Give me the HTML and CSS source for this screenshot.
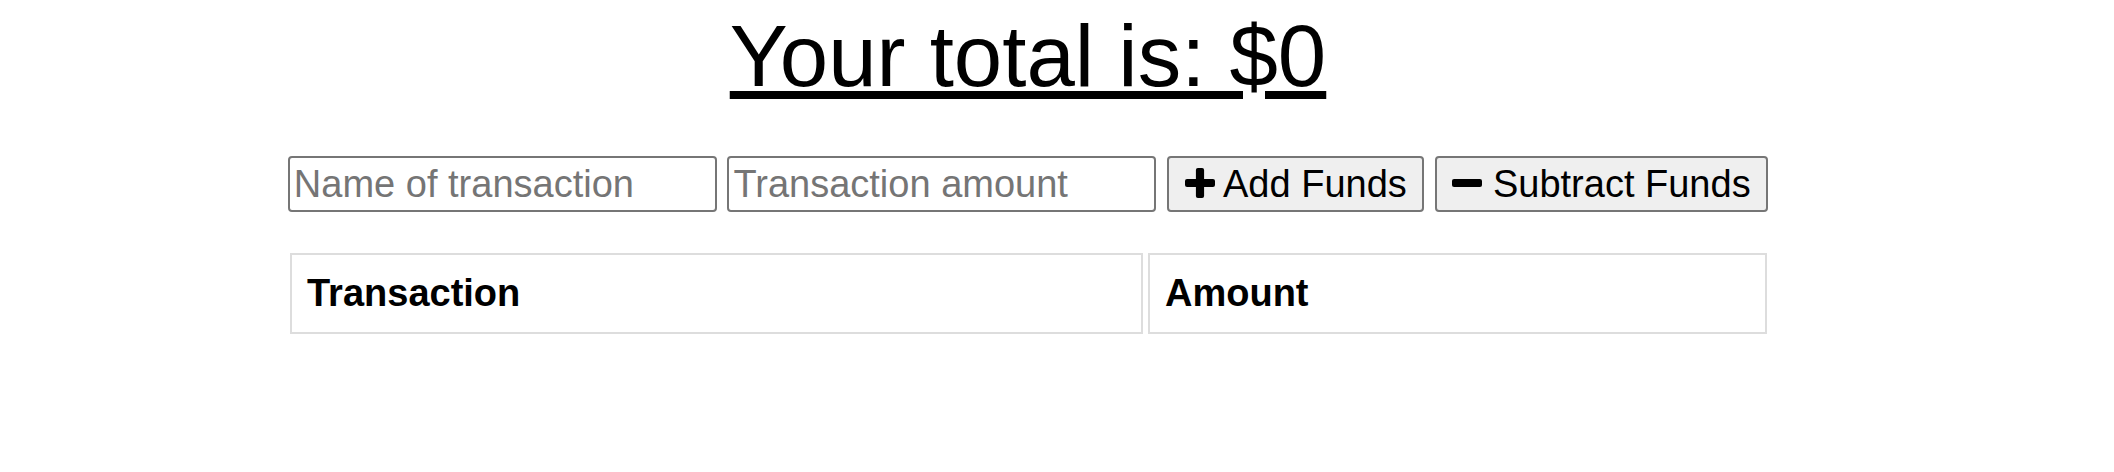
FILE: index.html
```html
<!DOCTYPE html>
<html lang="en">
<head>
<meta charset="utf-8">
<title>Budget</title>
<link rel="stylesheet" href="styles.css">
</head>
<body>
<div class="app">
  <h1 class="total">Your total is: $0</h1>
  <form class="controls">
    <input class="field" type="text" placeholder="Name of transaction">
    <input class="field" type="text" placeholder="Transaction amount">
    <button class="btn" type="button"><svg class="icon" viewBox="0 0 1408 1408" aria-hidden="true"><path d="M512 96q0-96 96-96h192q96 0 96 96v416h416q96 0 96 96v192q0 96-96 96h-416v416q0 96-96 96h-192q-96 0-96-96v-416h-416q-96 0-96-96v-192q0-96 96-96h416z"/></svg> Add Funds</button>
    <button class="btn" type="button"><svg class="icon" viewBox="0 0 1408 1408" aria-hidden="true"><rect x="0" y="512" width="1408" height="384" rx="96" ry="96"/></svg> Subtract Funds</button>
  </form>
  <table class="ledger">
    <thead>
      <tr>
        <th class="col-name">Transaction</th>
        <th class="col-amount">Amount</th>
      </tr>
    </thead>
    <tbody></tbody>
  </table>
</div>
</body>
</html>
```
FILE: styles.css
```css
html, body {
  margin: 0;
  padding: 0;
  background: #ffffff;
}

body {
  font-family: "Liberation Sans", Arial, sans-serif;
  color: #000000;
}

.app {
  width: 2056px;
  text-align: center;
}

.total {
  margin: 6px 0 0;
  font-size: 87px;
  font-weight: normal;
  line-height: normal;
  text-decoration: underline;
}

.controls {
  display: flex;
  justify-content: center;
  align-items: center;
  gap: 10.6px;
  margin: 50px 0 0;
}

.field {
  box-sizing: border-box;
  width: 429px;
  height: 56px;
  padding: 0 4px;
  border: 2px solid #767676;
  border-radius: 4px;
  font-family: "Liberation Sans", Arial, sans-serif;
  font-size: 38px;
  color: #000;
  background: #fff;
}

.field::placeholder {
  color: #757575;
}

.btn {
  box-sizing: border-box;
  height: 56px;
  padding: 0 15.5px;
  border: 2px solid #767676;
  border-radius: 4px;
  background: #efefef;
  font-family: "Liberation Sans", Arial, sans-serif;
  font-size: 38px;
  color: #000;
  white-space: nowrap;
}

.icon {
  width: 30px;
  height: 30px;
  vertical-align: -1px;
  fill: #000;
}

.ledger {
  width: 1487px;
  margin: 36px 0 0 285px;
  border-spacing: 5px;
  table-layout: fixed;
}

.ledger th {
  box-sizing: border-box;
  padding: 17px 15px;
  border: 2px solid #dddddd;
  text-align: left;
  font-size: 38px;
  font-weight: bold;
  line-height: normal;
}

.col-name {
  width: 853px;
}
```
